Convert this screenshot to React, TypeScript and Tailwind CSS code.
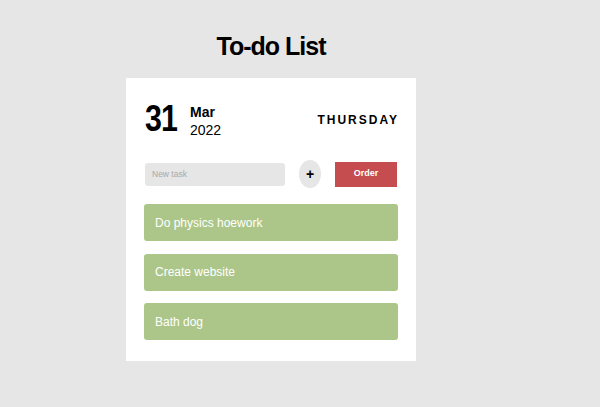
import React from "react";

export default function App() {
  const tasks = ["Do physics hoework", "Create website", "Bath dog"];
  return (
    <div
      className="w-[600px] h-[407px] bg-[#e6e6e6] flex flex-col items-center"
      style={{ fontFamily: '"Liberation Sans", Arial, sans-serif' }}
    >
      <h1 className="mt-[31px] ml-[-58px] text-[25px] leading-[30px] font-bold text-black tracking-[-1px]">
        To-do List
      </h1>
      <div className="mt-[17px] ml-[-58px] w-[290px] h-[283px] bg-white px-[18px] pt-[22px]">
        <div className="flex items-start justify-between pl-[1px]">
          <div className="flex items-start">
            <div className="w-[31px] h-[38px]">
              <div className="text-[37px] leading-[38px] font-bold text-black origin-left scale-x-[0.82] tracking-[-1px] whitespace-nowrap">
                31
              </div>
            </div>
            <div className="ml-[14px] mt-[3px] flex flex-col text-[14px] leading-[18px] text-black">
              <span className="font-bold">Mar</span>
              <span>2022</span>
            </div>
          </div>
          <div className="mt-[14px] text-[12px] leading-[12px] font-bold tracking-[2px] text-black mr-[-1px]">
            THURSDAY
          </div>
        </div>
        <div className="mt-[21px] h-[28px] flex items-center pl-[1px]">
          <div className="w-[140px] h-[23px] bg-[#e6e6e6] rounded-[3px] flex items-center pl-[7px] text-[8.5px] text-[#a8a8a8]">
            New task
          </div>
          <div className="ml-[14px] w-[22px] h-[28px] rounded-[50%] bg-[#e6e6e6] flex items-center justify-center text-[14px] font-bold text-black">
            +
          </div>
          <div className="ml-[14px] w-[62px] h-[25px] bg-[#c54c4f] flex items-center justify-center text-[9px] font-bold text-white">
            Order
          </div>
        </div>
        <div className="mt-[16px] flex flex-col gap-[12.5px]">
          {tasks.map((t) => (
            <div
              key={t}
              className="h-[37px] rounded-[3px] bg-[#acc689] flex items-center pl-[11px] text-[12px] text-white"
            >
              {t}
            </div>
          ))}
        </div>
      </div>
    </div>
  );
}
